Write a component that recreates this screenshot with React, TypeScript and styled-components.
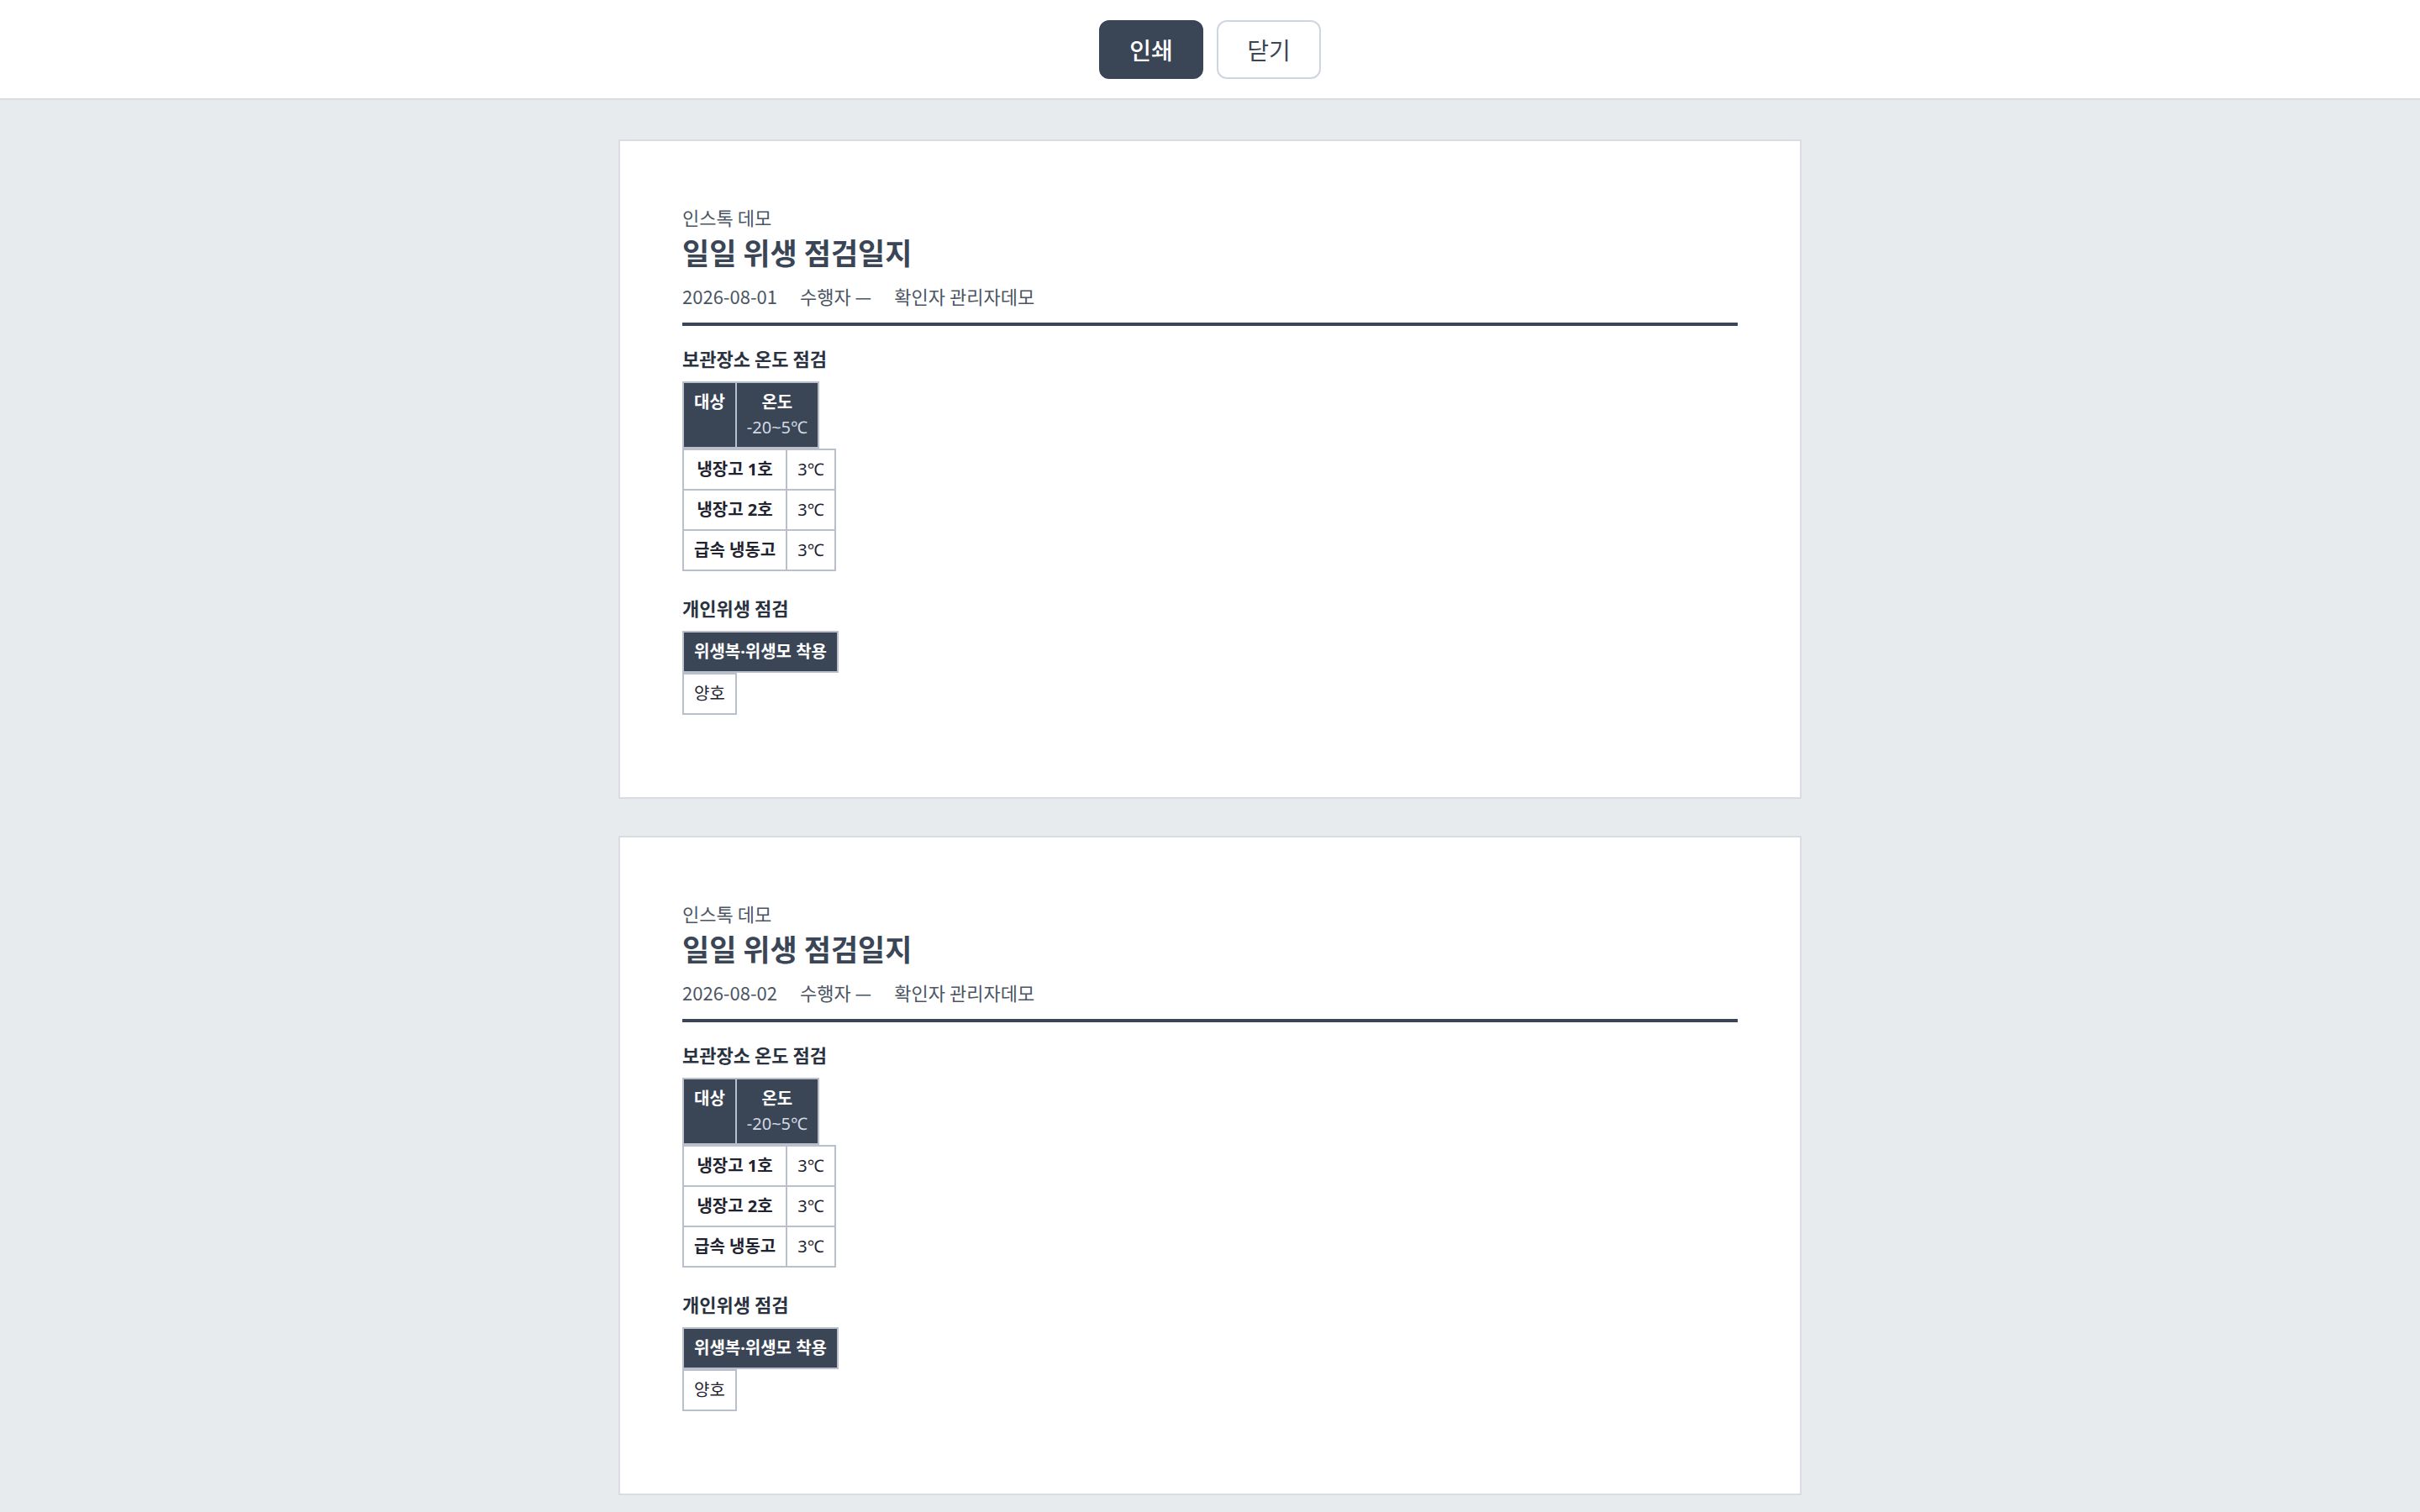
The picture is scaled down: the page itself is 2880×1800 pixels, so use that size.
import React from "react";
import styled, { createGlobalStyle } from "styled-components";

interface StorageRow {
  name: string;
  temp: string;
}

const days = ["2026-08-01", "2026-08-02", "2026-08-03"];

const storages: StorageRow[] = [
  { name: "냉장고 1호", temp: "3℃" },
  { name: "냉장고 2호", temp: "3℃" },
  { name: "급속 냉동고", temp: "3℃" },
];

const GlobalStyle = createGlobalStyle`
  html, body {
    margin: 0;
    padding: 0;
  }
  body {
    background: #e7ebee;
    font-family: "Noto Sans CJK KR", "Noto Sans", sans-serif;
    color: #3a4556;
  }
`;

const Page = styled.div`
  min-height: 100vh;
`;

const Toolbar = styled.div`
  display: flex;
  justify-content: center;
  gap: 16px;
  padding: 24px 0 23px;
  background: #ffffff;
  border-bottom: 2px solid #d9dde2;
`;

const ToolButton = styled.button<{ $primary?: boolean }>`
  height: 70px;
  width: 124px;
  border-radius: 12px;
  border: 2px solid ${(p) => (p.$primary ? "#3a4556" : "#d0d6e0")};
  background: ${(p) => (p.$primary ? "#3a4556" : "#ffffff")};
  color: ${(p) => (p.$primary ? "#ffffff" : "#3a4556")};
  font-family: inherit;
  font-size: 28px;
  font-weight: ${(p) => (p.$primary ? 500 : 400)};
  cursor: pointer;
`;

const Sheets = styled.div`
  display: flex;
  flex-direction: column;
  align-items: center;
  gap: 44px;
  padding: 47px 0 44px;
`;

const Sheet = styled.section`
  width: 1408px;
  box-sizing: border-box;
  padding: 74px 74px 70px;
  background: #ffffff;
  border: 2px solid #d9dde3;
`;

const SheetHead = styled.header`
  padding-bottom: 16px;
  border-bottom: 4px solid #3a4556;
  margin-bottom: 23px;
`;

const Org = styled.div`
  font-size: 22px;
  line-height: 32px;
  color: #4b5563;
`;

const Title = styled.h1`
  margin: 2px 0 12px;
  font-size: 35px;
  line-height: 48px;
  font-weight: 700;
  color: #3a4556;
`;

const Meta = styled.div`
  display: flex;
  gap: 27px;
  font-size: 22px;
  line-height: 32px;
  color: #4b5563;
`;

const Section = styled.div`
  margin-bottom: 28px;
`;

const SectionTitle = styled.h2`
  margin: 0 0 13px;
  font-size: 22px;
  line-height: 30px;
  font-weight: 700;
  color: #2a3240;
`;

const Grid = styled.table`
  border-collapse: collapse;
  border-spacing: 0;
  font-family: "Noto Sans", "Noto Sans CJK KR", sans-serif;
`;

const Th = styled.th`
  padding: 8px 12px;
  border: 2px solid #b9c0cc;
  background: #3a4556;
  color: #ffffff;
  font-size: 20px;
  line-height: 30px;
  font-weight: 700;
  text-align: center;
  vertical-align: top;
  white-space: nowrap;
`;

const Range = styled.div`
  font-weight: 400;
  color: #d3d9e2;
`;

const Td = styled.td<{ $strong?: boolean }>`
  padding: 8px 12px;
  border: 2px solid #b9c0cc;
  color: #1f2430;
  font-size: 20px;
  line-height: 30px;
  font-weight: ${(p) => (p.$strong ? 700 : 400)};
  text-align: center;
  white-space: nowrap;
`;

const DailySheet = ({ date }: { date: string }) => (
  <Sheet>
    <SheetHead>
      <Org>인스톡 데모</Org>
      <Title>일일 위생 점검일지</Title>
      <Meta>
        <span>{date}</span>
        <span>수행자 —</span>
        <span>확인자 관리자데모</span>
      </Meta>
    </SheetHead>

    <Section>
      <SectionTitle>보관장소 온도 점검</SectionTitle>
      <Grid>
        <thead>
          <tr>
            <Th>대상</Th>
            <Th>
              온도
              <Range>-20~5℃</Range>
            </Th>
          </tr>
        </thead>
      </Grid>
      <Grid>
        <tbody>
          {storages.map((row) => (
            <tr key={row.name}>
              <Td $strong>{row.name}</Td>
              <Td>{row.temp}</Td>
            </tr>
          ))}
        </tbody>
      </Grid>
    </Section>

    <Section>
      <SectionTitle>개인위생 점검</SectionTitle>
      <Grid>
        <thead>
          <tr>
            <Th>위생복·위생모 착용</Th>
          </tr>
        </thead>
      </Grid>
      <Grid>
        <tbody>
          <tr>
            <Td>양호</Td>
          </tr>
        </tbody>
      </Grid>
    </Section>
  </Sheet>
);

export default function App() {
  return (
    <Page>
      <GlobalStyle />
      <Toolbar>
        <ToolButton $primary onClick={() => window.print()}>
          인쇄
        </ToolButton>
        <ToolButton onClick={() => window.close()}>닫기</ToolButton>
      </Toolbar>
      <Sheets>
        {days.map((d) => (
          <DailySheet key={d} date={d} />
        ))}
      </Sheets>
    </Page>
  );
}
